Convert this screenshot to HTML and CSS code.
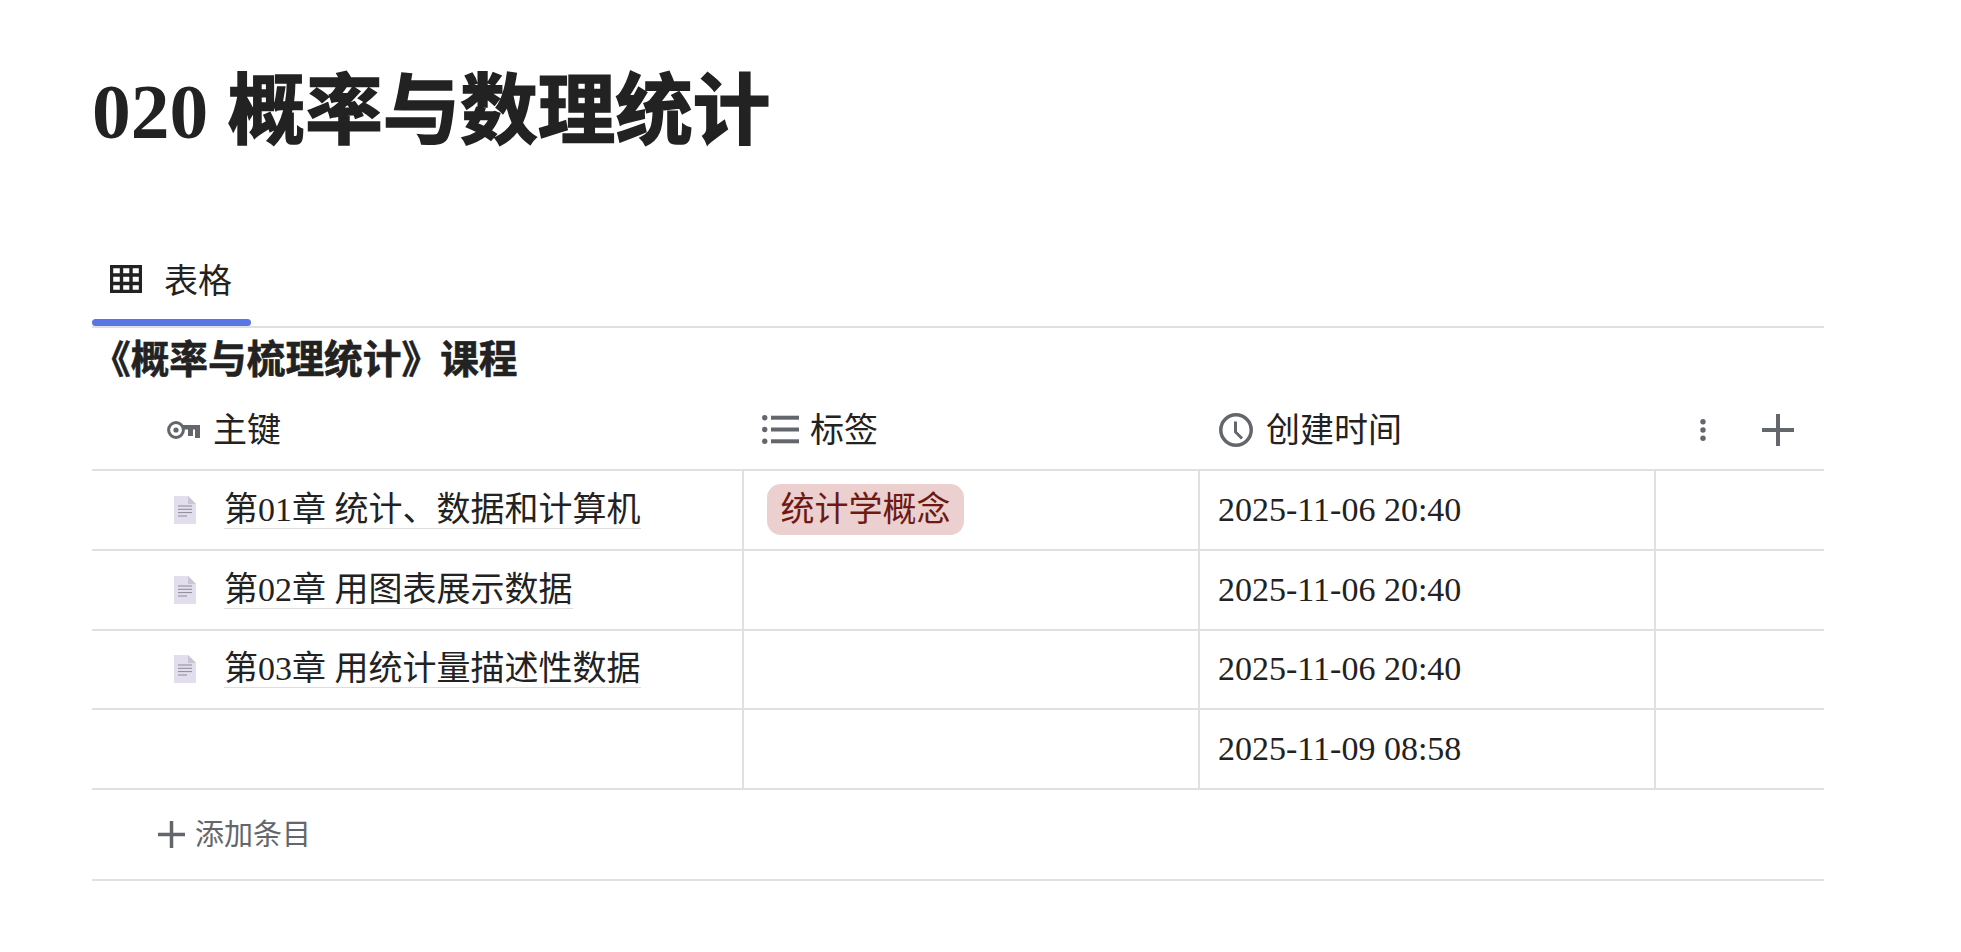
FILE: index.html
```html
<!DOCTYPE html>
<html lang="zh-CN">
<head>
    <meta charset="UTF-8">
    <meta name="viewport" content="width=device-width, initial-scale=1.0">
    <title>020 概率与数理统计</title>
    <link rel="stylesheet" href="styles.css">
</head>
<body>
    <div class="page">
        <h1 class="page-title">020 <span class="heavy">概率与数理统计</span></h1>

        <!-- View tabs -->
        <div class="tabs">
            <div class="tab">
                <div class="tab-label">
                    <svg class="tab-icon" viewBox="0 0 32 28"><path d="M1.5 1.5h29v25h-29zM1.5 10h29M1.5 18.5h29M11.5 1.5v25M21 1.5v25" fill="none" stroke="#222" stroke-width="3.4"/></svg>
                    <span>表格</span>
                </div>
                <div class="tab-bar"></div>
            </div>
        </div>

        <div class="db-title">《概率与梳理统计》课程</div>

        <!-- Table -->
        <div class="row head">
            <div class="cell name">
                <svg class="key-icon" viewBox="0 0 33 18"><circle cx="9" cy="9" r="7.4" fill="none" stroke="#63666b" stroke-width="3"/><circle cx="9" cy="9" r="2.6" fill="#63666b"/><path d="M15 4h18v13h-5V8.500h-2V15h-5V8.500h-6z" fill="#63666b"/></svg>
                <span class="head-text">主键</span>
            </div>
            <div class="cell tags">
                <svg class="list-icon" viewBox="0 0 37 29"><g fill="#63666b"><circle cx="2.700" cy="2.700" r="2.700"/><circle cx="2.700" cy="14.500" r="2.700"/><circle cx="2.700" cy="26.300" r="2.700"/><rect x="9" y="0.700" width="28" height="4"/><rect x="9" y="12.500" width="28" height="4"/><rect x="9" y="24.300" width="28" height="4"/></g></svg>
                <span class="head-text">标签</span>
            </div>
            <div class="cell created">
                <svg class="clock-icon" viewBox="0 0 34 34"><circle cx="17" cy="17" r="15.200" fill="none" stroke="#63666b" stroke-width="3.500"/><path d="M16.500 8.500v10.500l6.500 6.500" fill="none" stroke="#63666b" stroke-width="3"/></svg>
                <span class="head-text">创建时间</span>
            </div>
            <div class="cell actions">
                <svg class="dots-icon" viewBox="0 0 6 22"><g fill="#63666b"><circle cx="3" cy="2.700" r="2.700"/><circle cx="3" cy="11" r="2.700"/><circle cx="3" cy="19.300" r="2.700"/></g></svg>
                <svg class="plus-icon" viewBox="0 0 32 32"><path d="M16 0v32M0 16h32" stroke="#63666b" stroke-width="4"/></svg>
            </div>
        </div>

        <div class="row">
            <div class="cell name">
                <svg class="doc-icon" viewBox="0 0 22 28"><path d="M0 0h14l8 8v20H0z" fill="#e2deee"/><path d="M14 0l8 8h-8z" fill="#c9c5d3"/><path d="M4 10h14M4 13.300h14M4 16.600h14M4 20h9" stroke="#8b8a98" stroke-width="1"/></svg>
                <a class="doc-link">第01章 统计、数据和计算机</a>
            </div>
            <div class="cell tags"><span class="tag">统计学概念</span></div>
            <div class="cell created">2025-11-06 20:40</div>
            <div class="cell actions"></div>
        </div>

        <div class="row">
            <div class="cell name">
                <svg class="doc-icon" viewBox="0 0 22 28"><path d="M0 0h14l8 8v20H0z" fill="#e2deee"/><path d="M14 0l8 8h-8z" fill="#c9c5d3"/><path d="M4 10h14M4 13.300h14M4 16.600h14M4 20h9" stroke="#8b8a98" stroke-width="1"/></svg>
                <a class="doc-link">第02章 用图表展示数据</a>
            </div>
            <div class="cell tags"></div>
            <div class="cell created">2025-11-06 20:40</div>
            <div class="cell actions"></div>
        </div>

        <div class="row">
            <div class="cell name">
                <svg class="doc-icon" viewBox="0 0 22 28"><path d="M0 0h14l8 8v20H0z" fill="#e2deee"/><path d="M14 0l8 8h-8z" fill="#c9c5d3"/><path d="M4 10h14M4 13.300h14M4 16.600h14M4 20h9" stroke="#8b8a98" stroke-width="1"/></svg>
                <a class="doc-link">第03章 用统计量描述性数据</a>
            </div>
            <div class="cell tags"></div>
            <div class="cell created">2025-11-06 20:40</div>
            <div class="cell actions"></div>
        </div>

        <div class="row">
            <div class="cell name"></div>
            <div class="cell tags"></div>
            <div class="cell created">2025-11-09 08:58</div>
            <div class="cell actions"></div>
        </div>

        <div class="add-row">
            <svg class="add-icon" viewBox="0 0 27 27"><path d="M13.500 0v27M0 13.500h27" stroke="#63666b" stroke-width="3.500"/></svg>
            <span class="add-text">添加条目</span>
        </div>
    </div>
</body>
</html>
```

FILE: styles.css
```css
body {
    margin: 0;
    background: #fff;
    color: #222;
    font-family: "Liberation Serif", "Noto Sans CJK SC", serif;
    font-size: 34px;
}
.page {
    width: 1732px;
    margin-left: 92px;
}
.page-title {
    margin: 0;
    padding-top: 64px;
    height: 184px;
    box-sizing: border-box;
    font-size: 77.5px;
    line-height: 96px;
    font-weight: bold;
}
.heavy {
    -webkit-text-stroke: 1.6px #222;
}
.tabs {
    height: 144px;
    box-sizing: border-box;
    padding-top: 54px;
    border-bottom: 2px solid #e0e0e0;
}
.tab {
    width: 159px;
    height: 88px;
    display: flex;
    flex-direction: column;
}
.tab-label {
    flex: 1;
    display: flex;
    align-items: center;
    gap: 22px;
    padding-left: 18px;
}
.tab-bar {
    height: 7px;
    border-radius: 4px;
    background: #5876e6;
}
.tab-icon {
    width: 32px;
    height: 28px;
}
.db-title {
    height: 64px;
    font-size: 38.7px;
    font-weight: bold;
    line-height: 64px;
    -webkit-text-stroke: 0.6px #222;
}
.row {
    display: flex;
    height: 79.75px;
    box-sizing: border-box;
    border-bottom: 2px solid #e0e0e0;
}
.row.head {
    height: 79px;
}
.cell {
    display: flex;
    align-items: center;
    box-sizing: border-box;
    border-right: 2px solid #e0e0e0;
}
.head .cell {
    border-right: none;
    padding-bottom: 2px;
}
.head-text {
    margin-bottom: 4px;
}
.name {
    width: 652px;
    padding-left: 82px;
}
.tags {
    width: 456px;
    padding-left: 23px;
}
.created {
    width: 456px;
    padding-left: 18px;
}
.actions {
    flex: 1;
    border-right: none;
    justify-content: flex-end;
}
.head .name {
    padding-left: 75px;
    gap: 13px;
}
.head .tags {
    padding-left: 18px;
    gap: 11px;
}
.head .created {
    padding-left: 19px;
    gap: 13px;
}
.key-icon {
    width: 33px;
    height: 18px;
}
.list-icon {
    width: 37px;
    height: 29px;
}
.clock-icon {
    width: 34px;
    height: 34px;
}
.dots-icon {
    width: 6px;
    height: 22px;
    margin-right: 56px;
}
.plus-icon {
    width: 32px;
    height: 32px;
    margin-right: 30px;
}
.doc-icon {
    width: 22px;
    height: 28px;
    margin-right: 28px;
}
.doc-link {
    border-bottom: 1px solid #ddd;
    line-height: 37px;
}
.tag {
    background: #ebd0cf;
    color: #6e1a12;
    border-radius: 14px;
    padding: 0 13.500px;
    line-height: 51px;
    margin-bottom: 1px;
}
.add-row {
    height: 91px;
    box-sizing: border-box;
    border-bottom: 2px solid #e0e0e0;
    display: flex;
    align-items: center;
    padding-left: 66px;
    gap: 10px;
    font-size: 29px;
    color: #63666b;
}
.add-text {
    margin-bottom: 5px;
}
.add-icon {
    width: 27px;
    height: 27px;
}
```
